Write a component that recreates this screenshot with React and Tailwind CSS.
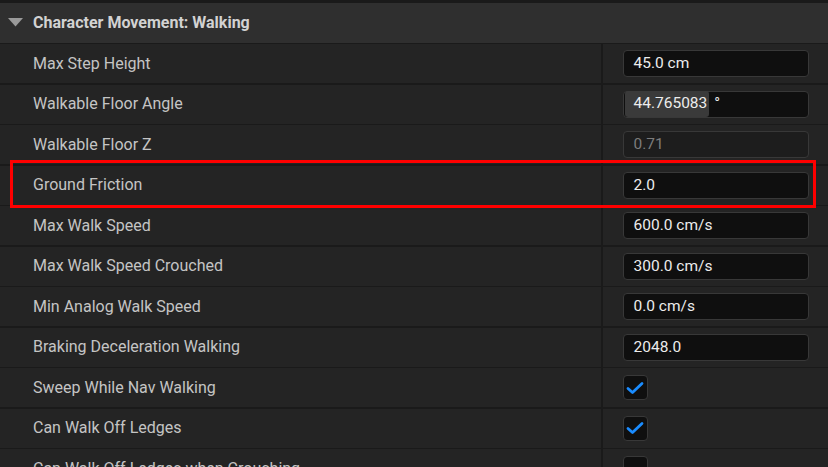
import React from 'react'

const rows = [
  { label: 'Max Step Height', value: '45.0 cm' },
  { label: 'Walkable Floor Angle', value: '44.765083', unit: '°', selected: true },
  { label: 'Walkable Floor Z', value: '0.71', disabled: true },
  { label: 'Ground Friction', value: '2.0', highlight: true },
  { label: 'Max Walk Speed', value: '600.0 cm/s' },
  { label: 'Max Walk Speed Crouched', value: '300.0 cm/s' },
  { label: 'Min Analog Walk Speed', value: '0.0 cm/s' },
  { label: 'Braking Deceleration Walking', value: '2048.0' },
  { label: 'Sweep While Nav Walking', check: true },
  { label: 'Can Walk Off Ledges', check: true },
  { label: 'Can Walk Off Ledges when Crouching', check: false },
]

function Checkbox({ checked }) {
  return (
    <div className="flex h-[25px] w-[25px] items-center justify-center rounded-[4px] border border-[#383838] bg-[#0f0f0f]">
      {checked && (
        <svg width="18" height="14" viewBox="0 0 18 14" fill="none">
          <path d="M2 7.5 L6.5 11.5 L16 2.5" stroke="#1a8cff" strokeWidth="2.8" strokeLinecap="round" strokeLinejoin="round" />
        </svg>
      )}
    </div>
  )
}

function ValueBox({ row }) {
  if (row.check !== undefined) return <Checkbox checked={row.check} />
  return (
    <div
      className={`flex h-[27px] w-[186px] items-center rounded-[4px] border border-[#383838] px-[10px] text-[15.5px] ${
        row.disabled ? 'bg-[#1d1d1d] text-[#7c7c7c]' : 'bg-[#0f0f0f] text-[#ececec]'
      }`}
    >
      {row.selected ? (
        <>
          <span className="-ml-[9px] rounded-[3px] bg-[#3a3a3a] py-[1px] pl-[9px] pr-[2px]">{row.value}</span>
          <span className="ml-[5px]">{row.unit}</span>
        </>
      ) : (
        row.value
      )}
    </div>
  )
}

export default function App() {
  return (
    <div className="relative h-[467px] w-[828px] overflow-hidden bg-[#1a1a1a] font-['Roboto',sans-serif]">
      <div className="h-[3px]" />
      <div className="flex h-[39.5px] items-center bg-[#2f2f2f]">
        <svg className="ml-[8px]" width="15" height="9" viewBox="0 0 15 9">
          <path d="M0 0 H15 L7.5 8.5 Z" fill="#9a9a9a" />
        </svg>
        <span className="ml-[10px] text-[16px] font-bold text-[#d2d2d2]">Character Movement: Walking</span>
      </div>
      <div className="mt-[1.5px] flex flex-col gap-[1.5px]">
        {rows.map((row) => (
          <div key={row.label} className="flex h-[39.05px] bg-[#242424]">
            <div className="flex w-[601px] items-center pl-[33px] text-[16px] text-[#c4c4c4]">{row.label}</div>
            <div className="w-[1.5px] bg-[#1a1a1a]" />
            <div className="flex flex-1 items-center pl-[20px]">
              <ValueBox row={row} />
            </div>
          </div>
        ))}
      </div>
      <div className="absolute left-[10px] top-[160px] h-[48px] w-[806px] border-[3px] border-[#ff0000]" />
    </div>
  )
}
